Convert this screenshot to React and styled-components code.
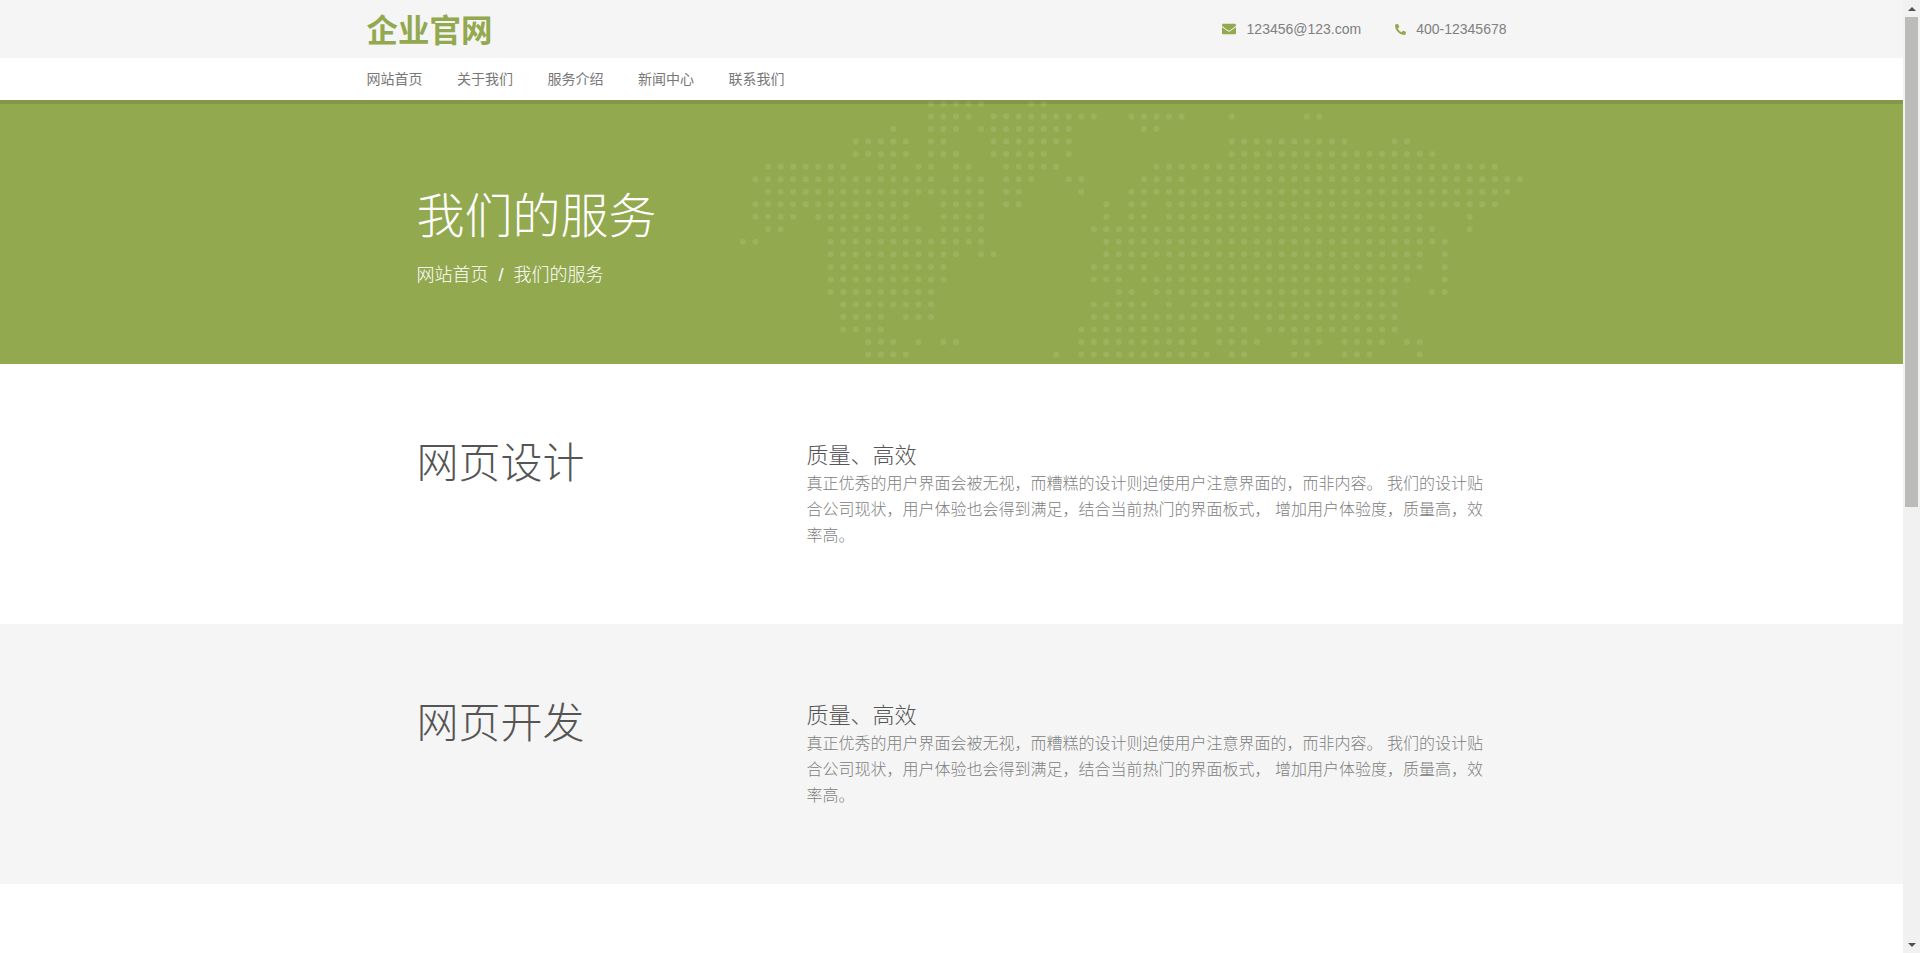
import React from "react";
import styled, { createGlobalStyle } from "styled-components";
import { FaEnvelope, FaPhoneAlt } from "react-icons/fa";

const GlobalStyle = createGlobalStyle`
  html, body {
    margin: 0;
    height: 100%;
    overflow: hidden;
  }
  body {
    background: #fff;
    color: #888;
    font-family: "Liberation Sans", "Noto Sans CJK SC", sans-serif;
    font-size: 14px;
  }
`;

// each row of the world map: [from, to] column ranges
const MAP_ROWS = [
  [[15, 19], [23, 24]],
  [[15, 18], [20, 28], [31, 35], [39, 39], [45, 46]],
  [[12, 12], [15, 17], [19, 26], [32, 33]],
  [[9, 13], [15, 16], [20, 26], [39, 48], [52, 53]],
  [[9, 13], [15, 17], [20, 24], [26, 26], [39, 55]],
  [[2, 8], [11, 12], [14, 15], [17, 18], [21, 25], [33, 60]],
  [[1, 15], [17, 19], [21, 23], [26, 27], [32, 35], [37, 62]],
  [[2, 19], [21, 22], [27, 27], [31, 61]],
  [[1, 13], [16, 19], [21, 22], [29, 29], [31, 32], [34, 60]],
  [[1, 4], [6, 13], [16, 19], [29, 29], [31, 32], [34, 54], [58, 58]],
  [[2, 3], [7, 14], [16, 19], [28, 55], [58, 58]],
  [[0, 1], [7, 19], [29, 56]],
  [[7, 17], [19, 20], [29, 54], [56, 56]],
  [[7, 16], [28, 32], [34, 54], [56, 56]],
  [[7, 16], [28, 30], [32, 53], [56, 56]],
  [[7, 15], [30, 31], [33, 52], [55, 56]],
  [[8, 15], [28, 32], [34, 34], [36, 52]],
  [[8, 11], [13, 15], [28, 39], [41, 52]],
  [[8, 11], [27, 36], [38, 40], [42, 52]],
  [[10, 12], [14, 14], [16, 17], [27, 36], [38, 41], [44, 46], [48, 51], [53, 54]],
  [[10, 13], [25, 25], [27, 37], [39, 40], [44, 45], [48, 50], [54, 54]],
];

const PITCH = 12.53;

const services = [
  { title: "网页设计", shade: false },
  { title: "网页开发", shade: true },
];

const NAV_ITEMS = ["网站首页", "关于我们", "服务介绍", "新闻中心", "联系我们"];

const Page = styled.div`
  display: flex;
  height: 100vh;
`;

const Content = styled.main`
  flex: 1;
  min-width: 0;
  overflow: hidden;
`;

const ScrollRail = styled.div`
  display: flex;
  flex-direction: column;
  flex: 0 0 17px;
  background: #f1f1f1;
`;

const ScrollButton = styled.div`
  display: flex;
  align-items: center;
  justify-content: center;
  flex: 0 0 17px;
  &::after {
    content: "";
    border-left: 4px solid transparent;
    border-right: 4px solid transparent;
    border-${(p) => (p.$down ? "top" : "bottom")}: 4px solid #505050;
  }
`;

const ScrollThumb = styled.div`
  flex: 0 0 490px;
  margin: 0 2px;
  background: #bbbbb9;
`;

const ScrollGap = styled.div`
  flex: 1;
`;

const Container = styled.div`
  width: 1170px;
  margin: 0 auto;
`;

const TopBar = styled.div`
  background: #f5f5f5;
  height: 58px;
`;

const TopInner = styled(Container)`
  display: flex;
  align-items: center;
  justify-content: space-between;
  height: 100%;
`;

const Logo = styled.div`
  padding-top: 4px;
  color: #93a94f;
  font-size: 31.5px;
  font-weight: 700;
  line-height: 54px;
`;

const Contacts = styled.div`
  display: flex;
  gap: 34px;
  padding-right: 30px;
`;

const Contact = styled.span`
  display: flex;
  align-items: center;
  gap: ${(p) => p.$gap}px;
  color: #808080;
  font-size: 14px;
  svg {
    color: #93a94f;
    font-size: ${(p) => p.$icon}px;
  }
`;

const NavBar = styled.nav`
  position: relative;
  z-index: 1;
  height: 42px;
  background: #fff;
  box-shadow: 0 4px 0 rgba(0, 0, 0, 0.1);
`;

const NavInner = styled(Container)`
  display: flex;
  align-items: center;
  gap: 34.5px;
  height: 39px;
`;

const NavLink = styled.a`
  color: #777;
  font-size: 14px;
`;

const Hero = styled.header`
  position: relative;
  height: 264px;
  background: #93a94f;
  overflow: hidden;
`;

const WorldMap = styled.svg`
  position: absolute;
  top: 0;
  left: 50%;
  margin-left: -211.5px;
  fill: #9db25e;
`;

const HeroInner = styled(Container)`
  position: relative;
  padding: 85px 50px 0;
  box-sizing: border-box;
  color: #fff;
`;

const HeroTitle = styled.h1`
  margin: 0;
  font-size: 48px;
  font-weight: 300;
  line-height: 64px;
`;

const Crumbs = styled.div`
  display: flex;
  gap: 10px;
  margin-top: 13px;
  font-size: 18px;
  font-weight: 300;
  line-height: 26px;
`;

const Section = styled.section`
  height: 260px;
  background: ${(p) => (p.$shade ? "#f5f5f5" : "#fff")};
`;

const SectionInner = styled(Container)`
  display: grid;
  grid-template-columns: 390px 780px;
  padding-top: 72px;
`;

const ServiceTitle = styled.h2`
  margin: 0;
  padding-left: 50px;
  color: #555;
  font-size: 42px;
  font-weight: 300;
  line-height: 56px;
`;

const ServiceBody = styled.div`
  padding: 5px 50px 0;
`;

const ServiceHead = styled.h3`
  margin: 0;
  color: #555;
  font-size: 22px;
  font-weight: 300;
  line-height: 30px;
`;

const ServiceText = styled.p`
  margin: 0;
  color: #808080;
  font-size: 16px;
  font-weight: 300;
  line-height: 26px;
`;

function MapDots() {
  return (
    <WorldMap width="800" height="264" viewBox="0 0 800 264">
      {MAP_ROWS.flatMap((ranges, r) =>
        ranges.flatMap(([from, to]) =>
          Array.from({ length: to - from + 1 }, (_, i) => (
            <circle
              key={`${r}-${from + i}`}
              cx={3 + PITCH * (from + i)}
              cy={4 + PITCH * r}
              r="3"
            />
          ))
        )
      )}
    </WorldMap>
  );
}

export default function App() {
  return (
    <Page>
      <GlobalStyle />
      <Content>
        <TopBar>
          <TopInner>
            <Logo>企业官网</Logo>
            <Contacts>
              <Contact $gap={11} $icon={14}>
                <FaEnvelope />
                123456@123.com
              </Contact>
              <Contact $gap={10} $icon={11}>
                <FaPhoneAlt />
                400-12345678
              </Contact>
            </Contacts>
          </TopInner>
        </TopBar>
        <NavBar>
          <NavInner>
            {NAV_ITEMS.map((item) => (
              <NavLink key={item}>{item}</NavLink>
            ))}
          </NavInner>
        </NavBar>
        <Hero>
          <MapDots />
          <HeroInner>
            <HeroTitle>我们的服务</HeroTitle>
            <Crumbs>
              <span>网站首页</span>
              <span>/</span>
              <span>我们的服务</span>
            </Crumbs>
          </HeroInner>
        </Hero>
        {services.map((s) => (
          <Section key={s.title} $shade={s.shade}>
            <SectionInner>
              <ServiceTitle>{s.title}</ServiceTitle>
              <ServiceBody>
                <ServiceHead>质量、高效</ServiceHead>
                <ServiceText>
                  真正优秀的用户界面会被无视，而糟糕的设计则迫使用户注意界面的，而非内容。
                  我们的设计贴合公司现状，用户体验也会得到满足，结合当前热门的界面板式，
                  增加用户体验度，质量高，效率高。
                </ServiceText>
              </ServiceBody>
            </SectionInner>
          </Section>
        ))}
      </Content>
      <ScrollRail>
        <ScrollButton />
        <ScrollThumb />
        <ScrollGap />
        <ScrollButton $down />
      </ScrollRail>
    </Page>
  );
}
